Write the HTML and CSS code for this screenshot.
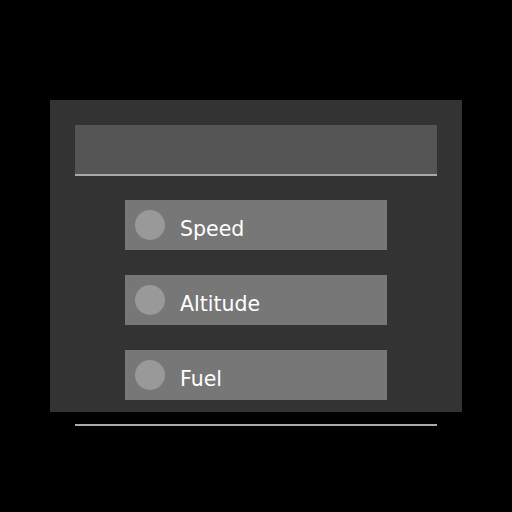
FILE: index.html
```html
<!DOCTYPE html>
<html>
<head>
<meta charset="utf-8">
<link rel="stylesheet" href="styles.css">
</head>
<body>
<div class="panel">
  <div class="header"></div>
  <div class="list">
    <div class="item"><span class="dot"></span><span class="label">Speed</span></div>
    <div class="item"><span class="dot"></span><span class="label">Altitude</span></div>
    <div class="item"><span class="dot"></span><span class="label">Fuel</span></div>
  </div>
</div>
<div class="rule"></div>
</body>
</html>
```
FILE: styles.css
```css
html, body {
  margin: 0;
  padding: 0;
  background: #000;
  width: 512px;
  height: 512px;
  overflow: hidden;
}
body {
  padding-top: 100px;
  box-sizing: border-box;
  font-family: "DejaVu Sans", sans-serif;
}
.panel {
  margin-left: 50px;
  width: 412px;
  box-sizing: border-box;
  background: #333;
  padding: 25px 25px 12px 25px;
}
.header {
  height: 49px;
  background: #555;
  border-bottom: 2px solid #aaa;
}
.list {
  margin-top: 24px;
  display: flex;
  flex-direction: column;
  gap: 25px;
  padding-left: 50px;
}
.item {
  width: 262px;
  height: 50px;
  background: #777;
  display: flex;
  align-items: center;
  padding-left: 10px;
  box-sizing: border-box;
}
.dot {
  width: 30px;
  height: 30px;
  border-radius: 50%;
  background: #999;
  flex: none;
}
.label {
  margin-left: 15px;
  color: #fff;
  font-size: 20.5px;
  line-height: 24px;
  padding-top: 8px;
}
.rule {
  margin-top: 12px;
  margin-left: 75px;
  width: 362px;
  height: 2px;
  background: #aaa;
}
```
